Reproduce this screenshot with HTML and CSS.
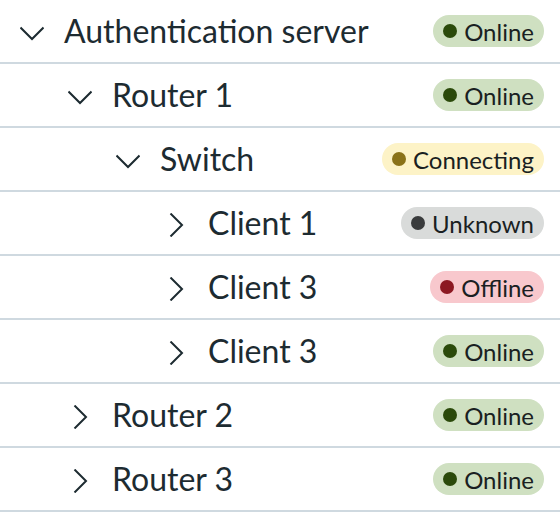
FILE: index.html
```html
<!DOCTYPE html>
<html lang="en">

<head>
    <meta charset="UTF-8" />
    <meta name="viewport" content="width=device-width, initial-scale=1.0" />
    <title>Network tree</title>
    <link rel="stylesheet" href="styles.css">
</head>

<body>
    <ul class="tree">
        <li class="node level-0">
            <svg class="chevron" viewBox="0 0 24 24"><polyline points="0.5,6.5 12,18 23.5,6.5" /></svg>
            <span class="label">Authentication server</span>
            <span class="status online"><i class="dot"></i>Online</span>
        </li>
        <li class="node level-1">
            <svg class="chevron" viewBox="0 0 24 24"><polyline points="0.5,6.5 12,18 23.5,6.5" /></svg>
            <span class="label">Router 1</span>
            <span class="status online"><i class="dot"></i>Online</span>
        </li>
        <li class="node level-2">
            <svg class="chevron" viewBox="0 0 24 24"><polyline points="0.5,6.5 12,18 23.5,6.5" /></svg>
            <span class="label">Switch</span>
            <span class="status connecting"><i class="dot"></i>Connecting</span>
        </li>
        <li class="node level-3">
            <svg class="chevron" viewBox="0 0 24 24"><polyline points="6.5,0.5 18,12 6.5,23.5" /></svg>
            <span class="label">Client 1</span>
            <span class="status unknown"><i class="dot"></i>Unknown</span>
        </li>
        <li class="node level-3">
            <svg class="chevron" viewBox="0 0 24 24"><polyline points="6.5,0.5 18,12 6.5,23.5" /></svg>
            <span class="label">Client 3</span>
            <span class="status offline"><i class="dot"></i>Offline</span>
        </li>
        <li class="node level-3">
            <svg class="chevron" viewBox="0 0 24 24"><polyline points="6.5,0.5 18,12 6.5,23.5" /></svg>
            <span class="label">Client 3</span>
            <span class="status online"><i class="dot"></i>Online</span>
        </li>
        <li class="node level-1">
            <svg class="chevron" viewBox="0 0 24 24"><polyline points="6.5,0.5 18,12 6.5,23.5" /></svg>
            <span class="label">Router 2</span>
            <span class="status online"><i class="dot"></i>Online</span>
        </li>
        <li class="node level-1">
            <svg class="chevron" viewBox="0 0 24 24"><polyline points="6.5,0.5 18,12 6.5,23.5" /></svg>
            <span class="label">Router 3</span>
            <span class="status online"><i class="dot"></i>Online</span>
        </li>
    </ul>
</body>

</html>
```

FILE: styles.css
```css
:root {
    --text: #1d2b31;
    --line: #cfd9e0;
}

body {
    margin: 0;
    font-family: Lato, 'Noto Sans', sans-serif;
    color: var(--text);
    background: #fff;
}

.tree {
    list-style: none;
    margin: 0;
    padding: 0;
}

.node {
    display: flex;
    align-items: center;
    height: 62px;
    border-bottom: 2px solid var(--line);
    padding-right: 16px;
}

.level-0 { padding-left: 20px; }
.level-1 { padding-left: 68px; }
.level-2 { padding-left: 116px; }
.level-3 { padding-left: 164px; }

.chevron {
    width: 24px;
    height: 24px;
    margin: 4px 20px 0 0;
    flex: none;
    fill: none;
    stroke: var(--text);
    stroke-width: 2;
}

.label {
    flex: 1;
    font-size: 32px;
    line-height: 1;
}

.status {
    display: inline-flex;
    align-items: center;
    gap: 7px;
    height: 32px;
    padding: 0 10px 0 10px;
    border-radius: 16px;
    font-size: 24px;
    color: #1a1f22;
    box-sizing: border-box;
}

.dot {
    width: 14px;
    height: 14px;
    border-radius: 50%;
}

.online { background: #cfe0c1; }
.online .dot { background: #2b4a0b; }

.connecting { background: #fdf3c7; }
.connecting .dot { background: #8a7218; }

.unknown { background: #d9dbda; }
.unknown .dot { background: #393b3c; }

.offline { background: #f8c8cd; }
.offline .dot { background: #8c1822; }
```
